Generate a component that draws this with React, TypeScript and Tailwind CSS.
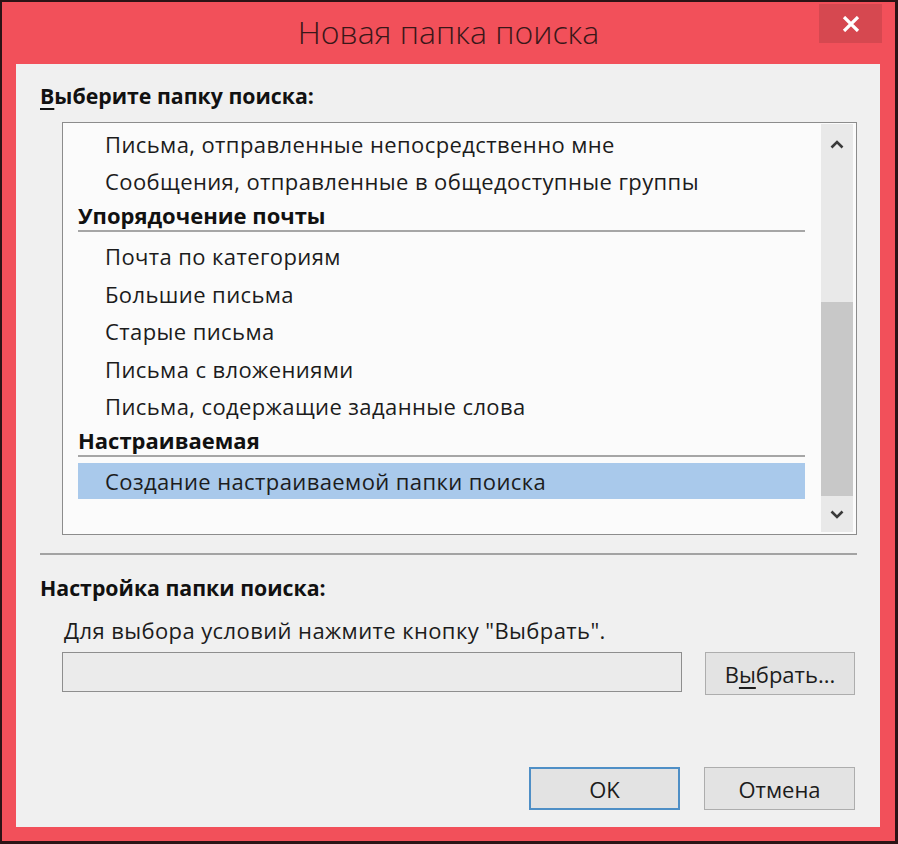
import React from "react";

const font = { fontFamily: '"Open Sans", "Noto Sans", "DejaVu Sans", sans-serif' };

function Item({ children }: { children: React.ReactNode }) {
  return (
    <div className="h-[37.5px] flex items-center pl-[27px] text-[22px] tracking-[0.4px] text-[#1c1c1c] leading-none whitespace-nowrap">
      {children}
    </div>
  );
}

function Header({ children }: { children: React.ReactNode }) {
  return (
    <div className="h-[31.5px] flex flex-col justify-end">
      <div className="flex-1 flex items-center text-[22px] font-bold text-[#111] leading-none whitespace-nowrap">
        {children}
      </div>
      <div className="h-[2px] bg-[#a6a6a6]" />
    </div>
  );
}

export default function App() {
  return (
    <div style={font} className="w-[898px] h-[844px] bg-[#2b1315] p-[2px] pb-[3px] pr-[3px]">
      <div className="h-full bg-[#f2505a] flex flex-col relative">
        {/* Title bar */}
        <div className="h-[62px] flex items-center justify-center">
          <span className="text-[32px] font-light text-[#3a1719] mt-[-3px] leading-none">
            Новая папка поиска
          </span>
        </div>
        <div className="absolute left-[817px] top-[2px] w-[63px] h-[39px] bg-[#d64850] flex items-center justify-center">
          <svg width="18" height="16" viewBox="0 0 18 16">
            <path d="M2 1 L16 15 M16 1 L2 15" stroke="white" strokeWidth="3.2" strokeLinecap="butt" />
          </svg>
        </div>

        {/* Content panel */}
        <div className="flex-1 ml-[14px] mr-[15px] mb-[14px] bg-[#f0f0f0] flex flex-col">
          <div className="mt-[19px] ml-[24px] text-[21.3px] font-bold text-[#111] leading-[26px]">
            <span className="underline underline-offset-[4px] decoration-[2px]">В</span>ыберите папку поиска:
          </div>

          {/* List box */}
          <div className="mt-[13px] ml-[46px] w-[795px] h-[413px] bg-[#fbfbfb] border border-[#8c8c8c] flex">
            <div className="flex-1 pl-[15px] pt-[2px]">
              <div className="w-[727px]">
                <Item>Письма, отправленные непосредственно мне</Item>
                <Item>Сообщения, отправленные в общедоступные группы</Item>
                <Header>Упорядочение почты</Header>
                <div className="h-[6px]" />
                <Item>Почта по категориям</Item>
                <Item>Большие письма</Item>
                <Item>Старые письма</Item>
                <Item>Письма с вложениями</Item>
                <Item>Письма, содержащие заданные слова</Item>
                <Header>Настраиваемая</Header>
                <div className="h-[6px]" />
                <div className="h-[36px] bg-[#a9c9eb] flex items-center pl-[27px] text-[22px] tracking-[0.4px] text-[#1c1c1c] leading-none whitespace-nowrap">
                  Создание настраиваемой папки поиска
                </div>
              </div>
            </div>
            {/* Scrollbar */}
            <div className="w-[32px] mt-[1px] mb-[2px] mr-[3px] bg-[#e9e9e9] flex flex-col">
              <div className="h-[40px] flex items-center justify-center">
                <svg width="14" height="9" viewBox="0 0 14 9">
                  <path d="M1.5 7.5 L7 2 L12.5 7.5" fill="none" stroke="#3a3a3a" strokeWidth="2.6" />
                </svg>
              </div>
              <div className="h-[138px]" />
              <div className="h-[194px] bg-[#c8c8c8]" />
              <div className="flex-1 flex items-center justify-center">
                <svg width="14" height="9" viewBox="0 0 14 9">
                  <path d="M1.5 1.5 L7 7 L12.5 1.5" fill="none" stroke="#3a3a3a" strokeWidth="2.6" />
                </svg>
              </div>
            </div>
          </div>

          {/* Separator */}
          <div className="mt-[18px] ml-[24px] w-[817px] h-[2px] bg-[#a3a3a3]" />

          <div className="mt-[20px] ml-[24px] text-[21.3px] font-bold text-[#111] leading-[26px]">
            Настройка папки поиска:
          </div>
          <div className="mt-[16px] ml-[48px] text-[22px] tracking-[0.4px] text-[#1c1c1c] leading-[26px]">
            Для выбора условий нажмите кнопку "Выбрать".
          </div>

          <div className="mt-[9px] ml-[46px] flex items-start">
            <div className="w-[620px] h-[40px] bg-[#ebebeb] border border-[#8e8e8e]" />
            <div className="ml-[23px] w-[150px] h-[43px] bg-[#e3e3e3] border border-[#adadad] flex items-center justify-center text-[22px] text-[#1c1c1c] leading-none">
              В<span className="underline underline-offset-[4px] decoration-[2px]">ы</span>брать...
            </div>
          </div>

          <div className="flex-1" />
          <div className="mb-[17px] ml-[513px] flex gap-[24px]">
            <div className="w-[151px] h-[43px] bg-[#e3e3e3] border-2 border-[#4f8fc6] flex items-center justify-center text-[22px] text-[#1c1c1c] leading-none">
              OK
            </div>
            <div className="w-[151px] h-[43px] bg-[#e3e3e3] border border-[#adadad] flex items-center justify-center text-[22px] text-[#1c1c1c] leading-none">
              Отмена
            </div>
          </div>
        </div>
      </div>
    </div>
  );
}
